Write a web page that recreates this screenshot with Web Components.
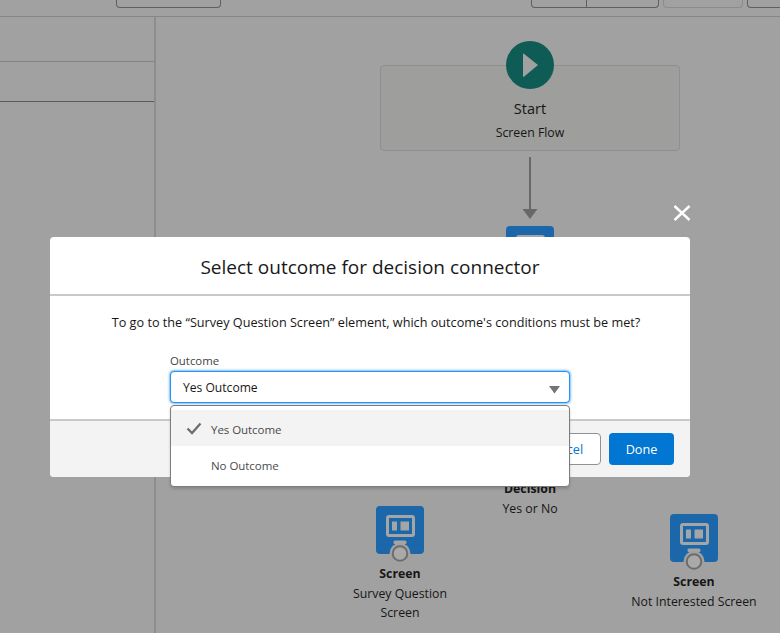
<!DOCTYPE html>
<html lang="en"><head><meta charset="utf-8"><title>Flow</title>
<style>
html,body{margin:0;height:100%;overflow:hidden}
body{font-family:"Open Sans","Noto Sans",sans-serif;color:#161616;background:#a1a1a1}
</style></head><body>
<flow-app></flow-app>
<script>
const def=(name,html)=>{customElements.define(name,class extends HTMLElement{
  connectedCallback(){if(this.shadowRoot)return;const r=this.attachShadow({mode:'open'});r.innerHTML=typeof html==='function'?html(this):html;}
});};

const screenIcon=`<svg width="48" height="58" viewBox="0 0 48 58" aria-hidden="true">
<rect width="48" height="48" rx="4" fill="#1b67a9"/>
<rect x="11.5" y="10.5" width="26" height="19" rx="1.5" fill="none" stroke="#a5a5a5" stroke-width="3"/>
<rect x="16" y="15.5" width="5" height="9" fill="#a5a5a5"/><rect x="24.500" y="15.5" width="8.500" height="9" fill="#a5a5a5"/>
<rect x="17.5" y="34.500" width="13" height="3.500" rx="1.500" fill="#a5a5a5"/>
<circle cx="24" cy="47.500" r="10.500" fill="#a1a1a1"/>
<circle cx="24" cy="47.500" r="7.300" fill="#a9a9a9" stroke="#6c6c6c" stroke-width="2"/></svg>`;

def('top-bar',`<style>
:host{display:flex;height:16px;border-bottom:1px solid #868686;box-sizing:content-box;padding-left:116px}
.b{height:7px;border:1px solid #5f5f5f;border-top:0;border-radius:0 0 4px 4px;box-sizing:content-box}
.a{width:103px;margin-right:310px}
.g{display:flex;width:126px;margin-right:4px}.g i{width:54px;border-right:1px solid #5f5f5f}
.d{width:78px;border-color:#8c8c8c;margin-right:4px}.e{flex:1;border-right:0;border-radius:0 0 0 4px}
</style><div class="b a"></div><div class="b g"><i></i></div><div class="b d"></div><div class="b e"></div>`);

def('side-panel',`<style>
:host{display:block;width:154px;height:100%;border-right:2px solid #8d8d8d;box-sizing:content-box}
.r1{height:44px;border-bottom:1px solid #838383}.r2{height:39px;border-bottom:1px solid #5b5b5b}
</style><div class="r1"></div><div class="r2"></div>`);

def('flow-node',h=>`<style>
:host{position:absolute;left:${h.getAttribute('cx')-100}px;top:${h.getAttribute('top')}px;width:200px;display:flex;flex-direction:column;align-items:center;text-align:center;font-size:12.3px;line-height:19.500px}
.l{margin-top:.5px;font-weight:700;line-height:20px}.s{width:${h.getAttribute('w')||200}px}
svg{display:block;margin-bottom:-1px}
</style>${screenIcon}<div class="l">Screen</div><div class="s"><slot></slot></div>`);

def('start-node',`<style>
:host{position:absolute;left:380px;top:65px;width:300px;height:86px;box-sizing:border-box;border:1px solid #8f8f8f;border-radius:4px;background:#9e9e9c;display:flex;flex-direction:column;align-items:center;text-align:center}
svg{position:absolute;left:125px;top:-25px}
.t{margin-top:30.500px;font-size:14.500px;line-height:24px}.u{margin-top:.5px;font-size:12.300px;line-height:24px}
</style><svg width="48" height="48" viewBox="0 0 48 48" aria-hidden="true"><circle cx="24" cy="24" r="24" fill="#0f5c56"/><path d="M17 13.500Q17 12 18.200 13L32 24 18.200 35.500Q17 36.500 17 35Z" fill="#a1a1a1"/></svg>
<div class="t">Start</div><div class="u">Screen Flow</div>`);

def('flow-arrow',`<style>:host{position:absolute;left:522px;top:157px;width:16px;height:63px}svg{display:block}</style>
<svg width="16" height="63" viewBox="0 0 16 63" aria-hidden="true"><path d="M8 0V54" stroke="#686868" stroke-width="2" fill="none"/><path d="M0.500 52H15.500L8 62Z" fill="#686868"/></svg>`);

def('flow-canvas',`<style>:host{display:block;flex:1;position:relative;height:100%}</style><slot></slot>`);

def('outcome-menu',`<style>
:host{position:absolute;left:-1px;top:calc(100% + 3px);width:400px;height:82px;box-sizing:border-box;background:#fff;border:1px solid #7d7d7d;border-radius:4px;box-shadow:0 2px 3px rgba(0,0,0,.16);padding:4px 0;font-size:11.500px;letter-spacing:-.05px;line-height:18px;color:#4a4a4a;display:flex;flex-direction:column}
.o{height:36px;box-sizing:border-box;padding-top:4px;display:flex;align-items:center;padding-left:40px;position:relative}
.o.on{background:#f3f3f3}
svg{position:absolute;left:15px;top:12px}
</style><div class="o on"><svg width="16" height="13" viewBox="0 0 16 13" aria-hidden="true"><path d="M1.500 6.500L6 11 14.500 1.500" fill="none" stroke="#706e6b" stroke-width="2.300"/></svg>Yes Outcome</div><div class="o">No Outcome</div>`);

def('outcome-select',`<style>
:host{display:block;width:400px;position:relative}
label{display:block;font-size:11.400px;line-height:18px;color:#444;margin-bottom:1px}
.box{position:relative;height:32px;box-sizing:border-box;border:1px solid #1b96ff;border-radius:4px;box-shadow:0 0 3px #0176d3;background:#fff;font-size:12.100px;line-height:32px;padding-left:12px;color:#181818}
svg{position:absolute;right:9px;top:14px}
</style><label>Outcome</label><div class="box">Yes Outcome<svg width="11" height="8" viewBox="0 0 11 8" aria-hidden="true"><path d="M0 0H11L5.500 7.500Z" fill="#747474"/></svg><outcome-menu></outcome-menu></div>`);

def('sf-button',h=>{const p=h.hasAttribute('primary');return `<style>
:host{display:inline-flex;align-items:center;justify-content:center;box-sizing:border-box;height:32px;border-radius:4px;font-size:12.700px;${p?'background:#0176d3;color:#fff;width:65px;':'background:#fff;color:#0176d3;border:1px solid #919191;width:77px;padding-left:2px;'}}
</style><slot></slot>`});

def('outcome-modal',`<style>
:host{position:absolute;left:50px;top:237px;width:640px;height:240px;display:flex;flex-direction:column;background:#fff;border-radius:4px}
header{height:59px;padding-top:2px;box-sizing:border-box;border-bottom:2px solid #c9c9c9;display:flex;align-items:center;justify-content:center;font-size:19px;flex:none;color:#181818}
main{flex:1;display:flex;flex-direction:column;align-items:center;padding-top:16px;font-size:12.670px;color:#181818}
p{margin:0 0 20px 12px;line-height:20px}
footer{height:58px;box-sizing:border-box;flex:none;border-top:2px solid #c9c9c9;background:#f3f3f3;border-radius:0 0 4px 4px;display:flex;justify-content:flex-end;align-items:center;gap:8px;padding-right:16px}
.x{position:absolute;left:622px;top:-34px;width:20px;height:20px}
</style><svg class="x" viewBox="0 0 20 20" aria-hidden="true"><path d="M2.500 3L17.500 17M17.500 3L2.500 17" stroke="#fff" stroke-width="2.400"/></svg>
<header>Select outcome for decision connector</header>
<main><p>To go to the “Survey Question Screen” element, which outcome's conditions must be met?</p><outcome-select></outcome-select></main>
<footer><sf-button>Cancel</sf-button><sf-button primary>Done</sf-button></footer>`);

def('flow-app',`<style>
:host{display:flex;flex-direction:column;height:633px;position:relative;overflow:hidden}
.b{flex:1;display:flex;min-height:0}
.lbl{position:absolute;left:430px;width:200px;text-align:center;font-size:12.300px;line-height:20px;top:478.500px}
.lbl b{display:block}
</style><top-bar></top-bar><div class="b"><side-panel></side-panel><flow-canvas></flow-canvas></div>
<start-node></start-node><flow-arrow></flow-arrow>
<flow-node cx="530" top="226"></flow-node>
<div class="lbl"><b>Decision</b>Yes or No</div>
<flow-node cx="400" top="506" w="110">Survey Question Screen</flow-node>
<flow-node cx="694" top="514">Not Interested Screen</flow-node>
<outcome-modal></outcome-modal>`);
</script>
</body></html>
